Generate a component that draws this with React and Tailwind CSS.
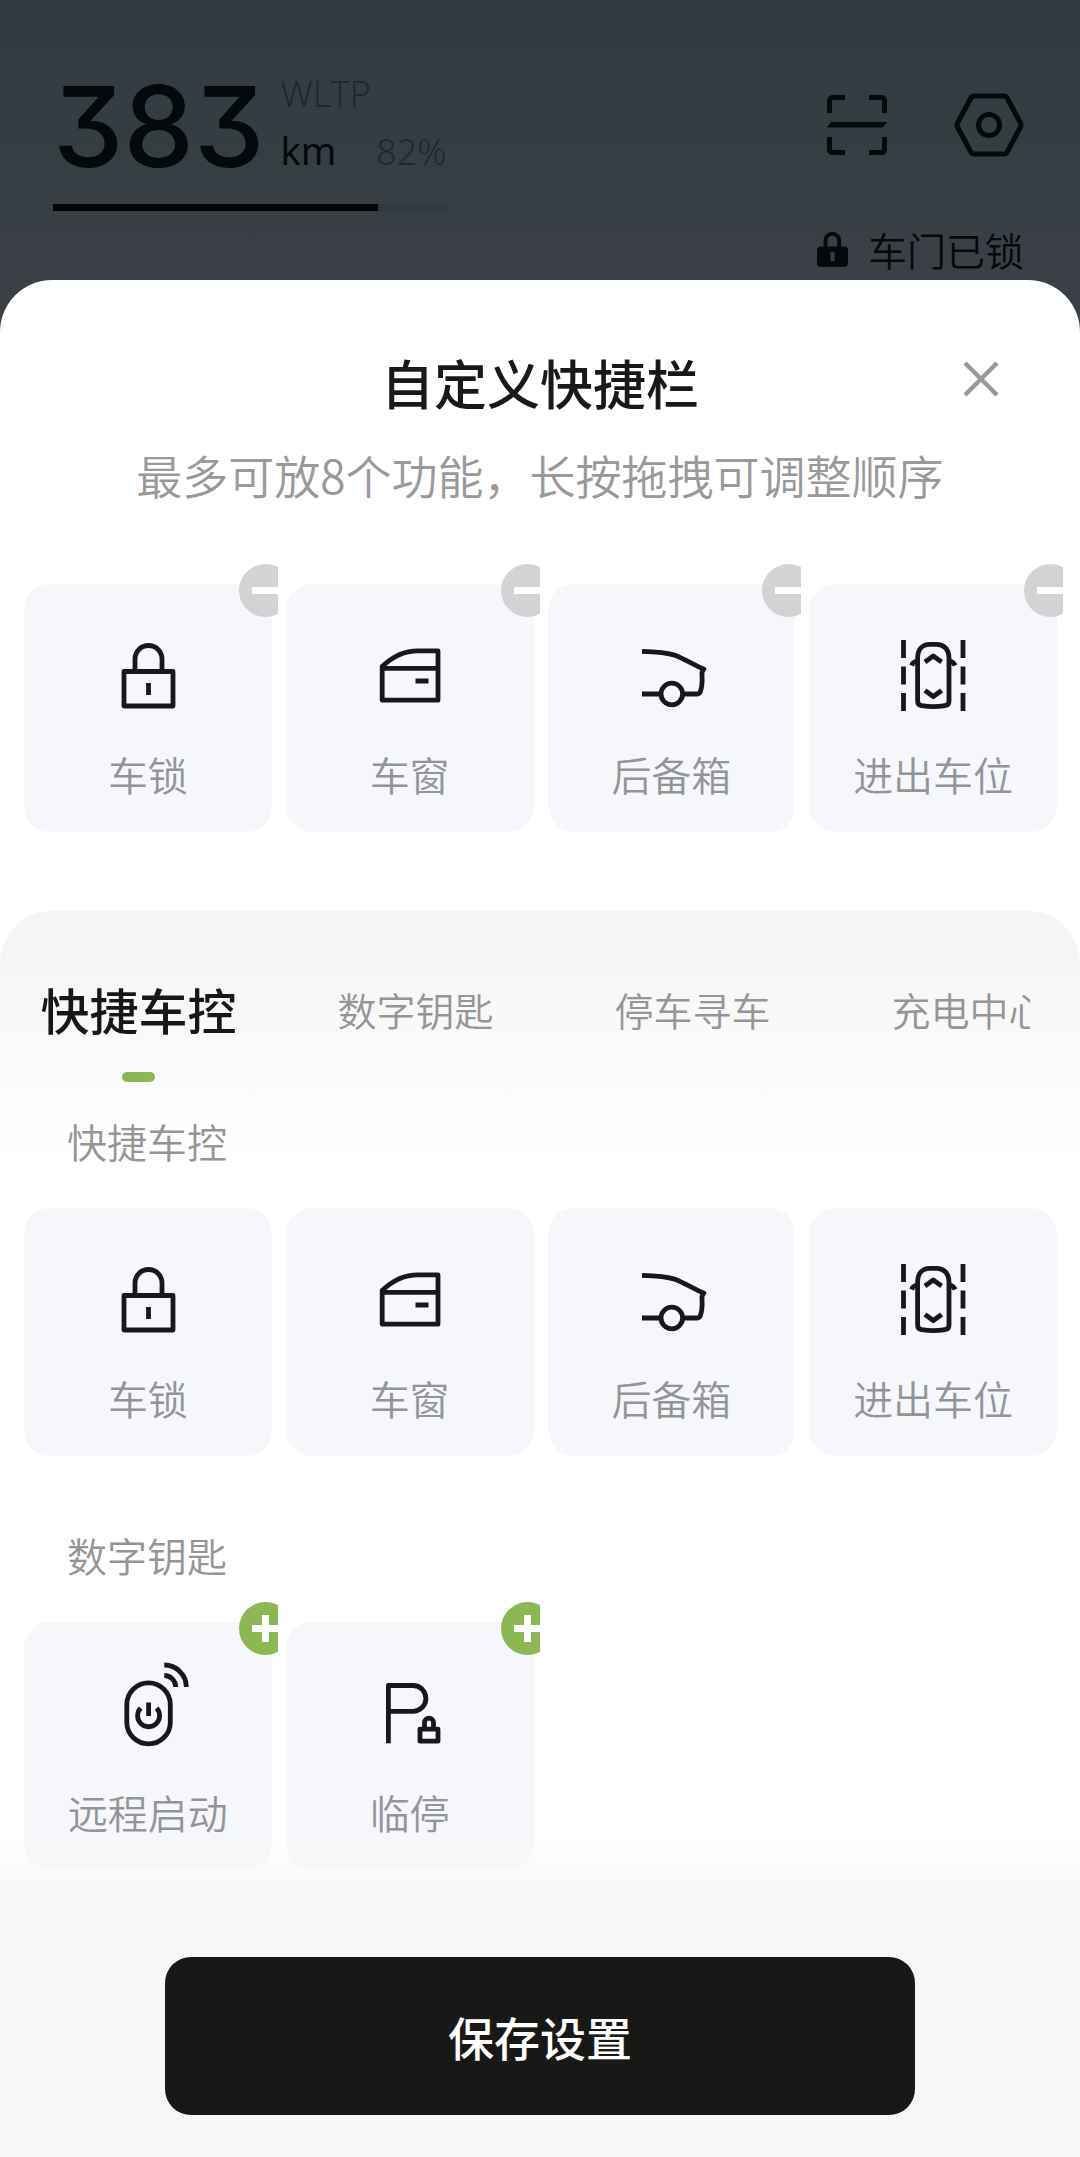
import React, { useState } from "react";

const LockIcon = () => (
  <>
    <rect x="16" y="35.5" width="49" height="34.5" />
    <path d="M27 35V23a13.5 13.5 0 0 1 27 0v12M40.5 47v12" />
  </>
);

const WindowIcon = () => (
  <path d="M12.2 64.2V30.5C22 21 34 14.8 48 14.8h20v49.4zM12.2 32.4H68M45.5 45h13" />
);

const TrunkIcon = () => (
  <>
    <path d="M11 15.3C24 15.6 36 16.6 44.5 19.4C51 22 61 27.5 72.8 33.2Q70.4 36 71 38.5C71.4 45 70.8 52 69.2 56Q68 58 66 58H52M11 58h18" />
    <circle cx="40.8" cy="58" r="10.8" />
  </>
);

const ParkingIcon = () => (
  <>
    <path d="M10.5 4v18M10.5 30.5v18M10.5 57v18M70 4v18M70 30.5v18M70 57v18" />
    <path d="M24.6 22C24.6 13 30 8.3 37 8.3h6.5C50.5 8.3 56 13 56 22v43c0 3-1.6 4.3-4 4.7-8 1.2-15.5 1.2-23.4 0-2.4-.4-4-1.7-4-4.7zM24 25q-4 .8-5.5 4.5M56.6 25q4 .8 5.5 4.5" />
    <path d="M32 26l8.3-6 8.3 6M32 54.5l8.3 6 8.3-6" />
  </>
);

const RemoteIcon = () => (
  <>
    <rect x="18.8" y="8.9" width="43.5" height="61" rx="21.7" />
    <path d="M32.6 34.2a11 11 0 1 0 16 0M40.6 28.5V42" />
    <path d="M56.3 1.5a11.4 11.4 0 0 1 11.4 11.4M56.3-9a22 22 0 0 1 22 22" />
  </>
);

const TempParkIcon = () => (
  <>
    <path d="M18.4 69.3V11.5H43a12.9 12.9 0 0 1 0 25.8H18.4" />
    <rect x="50" y="55.2" width="18" height="12" />
    <path d="M54.5 55v-6.4a4.5 4.5 0 0 1 9 0V55" />
  </>
);

const quickTiles = [
  { name: "车锁", Icon: LockIcon },
  { name: "车窗", Icon: WindowIcon },
  { name: "后备箱", Icon: TrunkIcon },
  { name: "进出车位", Icon: ParkingIcon },
];

const keyTiles = [
  { name: "远程启动", Icon: RemoteIcon },
  { name: "临停", Icon: TempParkIcon },
];

const tabs = ["快捷车控", "数字钥匙", "停车寻车", "充电中心"];

const Tile = ({ name, Icon, badge }) => (
  <li className="relative overflow-hidden pt-5 pr-1.5 pl-2">
    <button
      type="button"
      className="flex h-[248px] w-full flex-col items-center rounded-[26px] bg-[#f5f7fa] pt-[52px]"
    >
      <svg
        viewBox="0 0 80 80"
        className="size-20 overflow-visible"
        fill="none"
        stroke="#171819"
        strokeWidth="4.8"
        strokeLinejoin="round"
        aria-hidden="true"
      >
        <Icon />
      </svg>
      <span className="mt-7 text-[40px] leading-[60px] text-[#939497]">
        {name}
      </span>
    </button>
    {badge ? (
      <button
        type="button"
        aria-label={badge === "add" ? `添加${name}` : `移除${name}`}
        className={`absolute top-0 -right-[14px] size-[53px] rounded-full ${
          badge === "add" ? "bg-[#8db654]" : "bg-[#d2d3d4]"
        }`}
      >
        <svg
          viewBox="0 0 53 53"
          className="size-full"
          stroke="#fff"
          strokeWidth="7"
          aria-hidden="true"
        >
          <path d={badge === "add" ? "M13 26.5h27M26.5 13v27" : "M13 26.5h27"} />
        </svg>
      </button>
    ) : null}
  </li>
);

const TileGrid = ({ tiles, badge }) => (
  <ul className="grid grid-cols-4 pr-[17px] pl-4">
    {tiles.map((tile) => (
      <Tile key={tile.name} {...tile} badge={badge} />
    ))}
  </ul>
);

const StatusHeader = () => (
  <header className="flex justify-between bg-linear-to-b from-[#303942] via-[#343e42] to-[#3b4046] pr-14 pb-0.5 pl-[53px] text-[#04090d]">
    <div className="pt-[72px]">
      <div className="flex">
        <div className="font-['Inter'] text-[112px] leading-[108px] font-medium [font-feature-settings:'cv09']">
          383
        </div>
        <div className="ml-4 font-['Noto_Sans'] font-light">
          <div className="text-[36px] leading-[44px] text-[#1f282e]">WLTP</div>
          <div className="mt-2 flex items-baseline gap-10 leading-[52px]">
            <span className="text-[38px] font-normal">km</span>
            <span className="text-[36px] text-[#1f282e]">82%</span>
          </div>
        </div>
      </div>
      <div className="mt-6 h-[7px] w-[396px] bg-[#2f393f]">
        <div className="h-full w-[82%] bg-[#010604]" />
      </div>
    </div>
    <div className="flex flex-col items-end pt-[93px]">
      <div className="flex items-center gap-[67px]">
        <button type="button" aria-label="扫一扫">
          <svg viewBox="0 0 60 60" className="size-[60px]" fill="none" stroke="currentColor" strokeWidth="5">
            <path d="M2.5 18V6q0-3.5 3.5-3.5h12M42 2.5h12q3.5 0 3.5 3.5v12M57.5 42v12q0 3.5-3.5 3.5H42M18 57.5H6q-3.5 0-3.5-3.5V42" />
            <path d="M0 32.6L4 27h56l-4 5.6z" fill="currentColor" stroke="none" />
          </svg>
        </button>
        <button type="button" aria-label="设置">
          <svg
            viewBox="0 0 70 64"
            className="h-16 w-[70px]"
            fill="none"
            stroke="currentColor"
            strokeWidth="5"
            strokeLinejoin="round"
          >
            <path d="M20 3h30q2 0 3 1.7L66.5 30q1 2 0 4L53 59.3q-1 1.7-3 1.7H20q-2 0-3-1.7L3.5 34q-1-2 0-4L17 4.7q1-1.7 3-1.7z" />
            <circle cx="35" cy="32" r="10.5" />
          </svg>
        </button>
      </div>
      <div className="mt-[63px] flex items-center gap-5">
        <svg viewBox="0 0 31 36" className="h-9 w-[31px]" fill="none" aria-hidden="true">
          <path d="M8.5 17V9.5a6.8 6.8 0 0 1 13.6 0V17" stroke="currentColor" strokeWidth="4" />
          <path d="M4 15.5h23q4 0 4 4V32q0 4-4 4H4q-4 0-4-4V19.5q0-4 4-4zM13.5 21v9h4v-9z" fill="currentColor" fillRule="evenodd" />
        </svg>
        <span className="text-[39px] leading-[58px]">车门已锁</span>
      </div>
    </div>
  </header>
);

export default function App() {
  const [activeTab, setActiveTab] = useState(tabs[0]);

  return (
    <div className="flex min-h-screen flex-col bg-[#3b4046] font-['Noto_Sans_CJK_SC',sans-serif] font-[350]">
      <StatusHeader />

      <main className="flex grow flex-col rounded-t-[52px] bg-white">
        <div className="relative pt-[66px] text-center">
          <h1 className="text-[53px] leading-[72px] font-medium text-[#191919]">
            自定义快捷栏
          </h1>
          <p className="mt-5 text-[46px] leading-[72px] text-[#999]">
            最多可放8个功能，长按拖拽可调整顺序
          </p>
          <button type="button" aria-label="关闭" className="absolute top-[75px] right-[75px] p-2">
            <svg viewBox="0 0 32 32" className="size-8 overflow-visible" stroke="#999" strokeWidth="4.5">
              <path d="M0 0l32 32M32 0L0 32" />
            </svg>
          </button>
        </div>

        <div className="mt-[54px]">
          <TileGrid tiles={quickTiles} badge="remove" />
        </div>

        <section className="mt-[79px] flex grow flex-col rounded-t-[52px] bg-linear-to-b from-[#f4f4f4] to-white to-[260px]">
          <nav className="mr-[50px] flex overflow-hidden pt-[62px]">
            {tabs.map((tab) => (
              <button
                key={tab}
                type="button"
                onClick={() => setActiveTab(tab)}
                className={`flex w-[277px] shrink-0 flex-col items-center leading-[72px] ${
                  tab === activeTab
                    ? "text-[49px] font-medium text-[#171717]"
                    : "text-[39px] text-[#959595]"
                }`}
              >
                {tab}
                {tab === activeTab ? (
                  <span className="mt-[27px] h-[10px] w-[33px] rounded-full bg-[#8db654]" />
                ) : null}
              </button>
            ))}
          </nav>

          <h2 className="mt-[29px] px-[67px] text-[40px] leading-[60px] text-[#959595]">
            快捷车控
          </h2>
          <div className="mt-[17px]">
            <TileGrid tiles={quickTiles} />
          </div>

          <h2 className="mt-[69px] px-[67px] text-[40px] leading-[60px] text-[#959595]">
            数字钥匙
          </h2>
          <div className="mt-[17px]">
            <TileGrid tiles={keyTiles} badge="add" />
          </div>

          {/* save bar fades up over the end of the list */}
          <div className="relative -mt-[40px] flex grow bg-linear-to-b from-transparent to-[#f7f7f7] to-[72px] px-[165px] pt-[127px] pb-[42px]">
            <button
              type="button"
              className="h-[158px] w-full rounded-[26px] bg-[#181816] text-[46px] font-medium text-white"
            >
              保存设置
            </button>
          </div>
        </section>
      </main>
    </div>
  );
}
